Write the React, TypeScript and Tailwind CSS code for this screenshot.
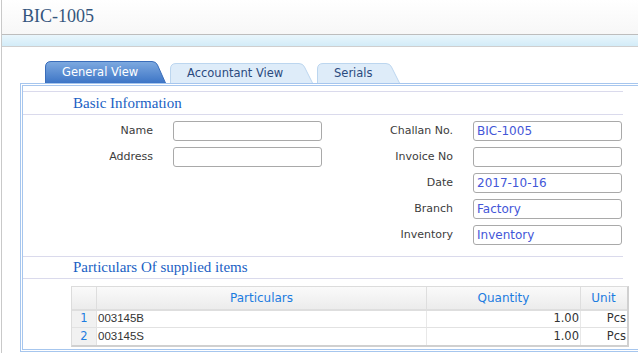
import React from "react";

const sans = { fontFamily: '"DejaVu Sans", Verdana, sans-serif' };
const serif = { fontFamily: '"Liberation Serif", "Times New Roman", serif' };
const arial = { fontFamily: '"Liberation Sans", Arial, sans-serif' };

function Tab({ label, width, active }: { label: string; width: number; active?: boolean }) {
  const h = active ? 22 : 20;
  const W = width;
  const d = `M0.5,${h} L0.5,6 Q0.5,0.5 6,0.5 L${W - 14},0.5 Q${W - 10},0.5 ${W - 8.5},4 L${W - 0.5},${h}`;
  return (
    <div className="relative flex items-center" style={{ width: W, height: h }}>
      <svg className="absolute inset-0" width={W} height={h} viewBox={`0 0 ${W} ${h}`}>
        <defs>
          <linearGradient id="tabActive" x1="0" y1="0" x2="0" y2="1">
            <stop offset="0" stopColor="#7eaae0" />
            <stop offset="1" stopColor="#3d75c6" />
          </linearGradient>
        </defs>
        <path
          d={d}
          fill={active ? "url(#tabActive)" : "#deecf9"}
          stroke={active ? "#3a6dba" : "#bcd6ef"}
          strokeWidth="1"
        />
      </svg>
      <span
        className={`relative pl-[17px] pt-[1px] text-[11.5px] ${active ? "text-white" : "text-[#2b4a7e]"}`}
        style={sans}
      >
        {label}
      </span>
    </div>
  );
}

function Field({ label, value }: { label: string; value?: string }) {
  return (
    <div className="flex h-[20px] items-center">
      <div className="w-[130px] text-right text-[11px] text-[#3c3c3c]" style={sans}>
        {label}
      </div>
      <div
        className="ml-[20px] flex h-[20px] w-[149px] items-center rounded-[3px] border border-[#a9a9a9] bg-white pl-[3px] text-[12px] text-[#4356d8]"
        style={sans}
      >
        {value}
      </div>
    </div>
  );
}

function Heading({ text, h }: { text: string; h: string }) {
  return (
    <div className={`flex items-center border-y border-[#dadaec] pl-[50px] ${h}`}>
      <span className="text-[15px] text-[#1a5fc4]" style={serif}>
        {text}
      </span>
    </div>
  );
}

export default function App() {
  const rows = [
    { n: 1, p: "003145B", q: "1.00", u: "Pcs" },
    { n: 2, p: "003145S", q: "1.00", u: "Pcs" },
  ];
  return (
    <div className="h-[353px] w-[638px] overflow-hidden bg-white pl-px">
      <div className="h-full border-l border-[#c9c9c9]">
        <div className="flex h-[35px] items-center border-b border-[#bdbdbd] bg-gradient-to-b from-white to-[#f7f7f7] pl-[20px]">
          <span className="pb-[2px] text-[18px] text-[#34557d]" style={serif}>
            BIC-1005
          </span>
        </div>
        <div className="h-[12px] border-b border-[#cfcfcf] bg-gradient-to-b from-[#e9f6fc] to-[#d3ecf8]" />
        <div className="ml-[18px] mt-[14px]">
          <div className="flex h-[22px] items-end gap-[4px] pl-[25px]">
            <Tab label="General View" width={121} active />
            <Tab label="Accountant View" width={143} />
            <Tab label="Serials" width={83} />
          </div>
          <div className="h-[269px] w-[640px] border border-[#a6c6ee] p-px">
            <div className="h-full border border-[#a6c6ee]">
              <div className="w-[600px] pt-[5px]">
                <Heading text="Basic Information" h="h-[24px]" />
                <div className="mt-[6px] flex">
                  <div className="flex w-[300px] flex-col gap-[6px]">
                    <Field label="Name" />
                    <Field label="Address" />
                  </div>
                  <div className="flex w-[300px] flex-col gap-[6px]">
                    <Field label="Challan No." value="BIC-1005" />
                    <Field label="Invoice No" />
                    <Field label="Date" value="2017-10-16" />
                    <Field label="Branch" value="Factory" />
                    <Field label="Inventory" value="Inventory" />
                  </div>
                </div>
                <div className="mt-[11px]">
                  <Heading text="Particulars Of supplied items" h="h-[23px]" />
                </div>
              </div>
              <div className="ml-[48px] mt-[7px] w-[558px] border border-[#dcdcdc] border-b-[2px] border-r-[2px] border-b-[#d0d0d0] border-r-[#d0d0d0]">
                <div className="flex h-[24px] border-b-[2px] border-[#dedede] bg-gradient-to-b from-[#fafafa] to-[#ececec] text-[12px] text-[#1c7ce0]" style={sans}>
                  <div className="w-[25px] border-r border-[#dedede]" />
                  <div className="flex w-[330px] items-center justify-center border-r border-[#dedede]">Particulars</div>
                  <div className="flex w-[154px] items-center justify-center border-r border-[#dedede]">Quantity</div>
                  <div className="flex w-[45px] items-center justify-center">Unit</div>
                </div>
                {rows.map((r, i) => (
                  <div key={r.n} className={`flex h-[17px] ${i === 0 ? "border-b border-[#e2e2e2]" : ""}`}>
                    <div className="flex w-[25px] items-center justify-center border-r border-[#e2e2e2] bg-[#f1f1f1] text-[11.5px] text-[#1c7ce0]" style={sans}>
                      {r.n}
                    </div>
                    <div className="flex w-[330px] items-center border-r border-[#e8e8e8] pl-[1px] text-[11.5px] text-[#333]" style={arial}>
                      {r.p}
                    </div>
                    <div className="flex w-[154px] items-center justify-end border-r border-[#e8e8e8] pr-[1px] text-[11.5px] text-[#333]" style={sans}>
                      {r.q}
                    </div>
                    <div className="flex w-[45px] items-center justify-end text-[11.5px] text-[#333]" style={sans}>
                      {r.u}
                    </div>
                  </div>
                ))}
              </div>
            </div>
          </div>
        </div>
      </div>
    </div>
  );
}
